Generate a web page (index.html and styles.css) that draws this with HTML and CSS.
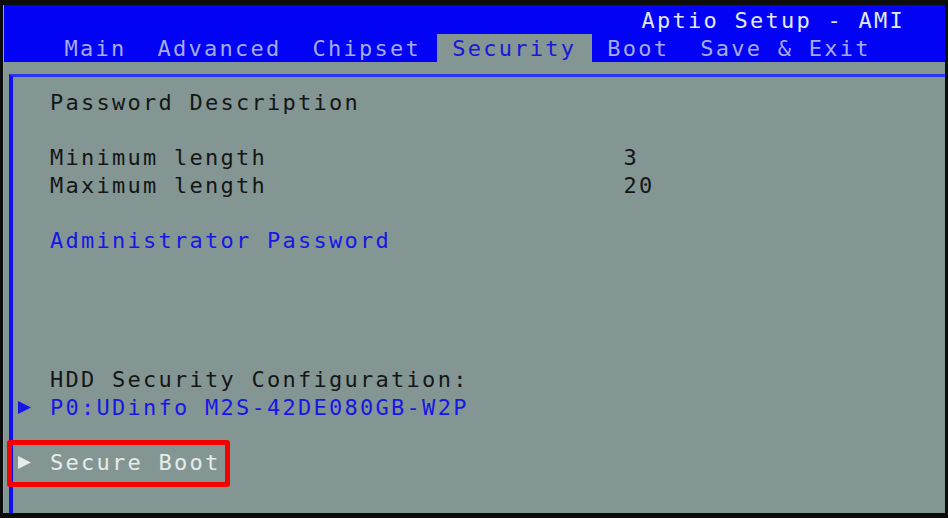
FILE: index.html
```html
<!DOCTYPE html>
<html lang="en">
<head>
<meta charset="utf-8">
<title>Aptio Setup - AMI</title>
<link rel="stylesheet" href="styles.css">
</head>
<body>
<div class="screen">
  <header class="header">
    <div class="title">Aptio Setup - AMI</div>
    <nav class="tabs">
      <span class="tab">Main</span>
      <span class="tab">Advanced</span>
      <span class="tab">Chipset</span>
      <span class="tab active">Security</span>
      <span class="tab">Boot</span>
      <span class="tab">Save &amp; Exit</span>
    </nav>
  </header>
  <main class="panel">
    <div class="row"><span class="marker"></span><span class="label">Password Description</span></div>
    <div class="row gap-1"><span class="marker"></span><span class="label wide">Minimum length</span><span class="value">3</span></div>
    <div class="row"><span class="marker"></span><span class="label wide">Maximum length</span><span class="value">20</span></div>
    <div class="row gap-1 link"><span class="marker"></span><span class="label">Administrator Password</span></div>
    <div class="row gap-4"><span class="marker"></span><span class="label">HDD Security Configuration:</span></div>
    <div class="row link"><span class="marker"><svg class="arrow" viewBox="0 0 12 12"><polygon points="0,0 12,6 0,12"/></svg></span><span class="label">P0:UDinfo M2S-42DE080GB-W2P</span></div>
    <div class="row gap-1 selected"><span class="marker"><svg class="arrow" viewBox="0 0 12 12"><polygon points="0,0 12,6 0,12"/></svg></span><span class="label">Secure Boot</span></div>
  </main>
</div>
</body>
</html>
```

FILE: styles.css
```css
html, body {
  margin: 0;
  padding: 0;
  background: #0c0c0c;
}

body {
  width: 948px;
  height: 518px;
  overflow: hidden;
  font-family: "DejaVu Sans Mono", "Liberation Mono", monospace;
  font-size: 22px;
  letter-spacing: 2.26px;
}

.screen {
  margin: 5px 3px 0 3px;
  height: 508px;
  background: #849694;
  display: flex;
  flex-direction: column;
  border-left: 1px solid #9aa3a2;
  box-sizing: border-box;
}

.header {
  background: #0202f4;
  height: 57px;
  display: flex;
  flex-direction: column;
}

.title {
  height: 29px;
  line-height: 31px;
  text-align: right;
  padding-right: 40px;
  color: #e2e8f4;
}

.tabs {
  display: flex;
  height: 28px;
  padding-left: 45px;
}

.tab {
  padding: 0 15.5px;
  line-height: 29px;
  color: #a6aaee;
}

.tab.active {
  background: #849694;
  color: #1818d6;
}

.panel {
  flex: 1;
  margin: 12px 0 0 5px;
  border-top: 3px solid #2a36f4;
  border-left: 4px solid #1010f6;
  padding-top: 12px;
  color: #141616;
}

.row {
  display: flex;
  align-items: center;
  height: 27.7px;
  line-height: 27.7px;
}

.gap-1 { margin-top: 27.7px; }
.gap-4 { margin-top: 110.8px; }

.marker {
  width: 37px;
  flex: none;
  display: flex;
  align-items: center;
}

.arrow {
  width: 13px;
  height: 13px;
  margin-left: 5px;
  fill: currentColor;
}

.label.wide {
  width: 573.5px;
}

.link { color: #1616e6; }

.selected {
  color: #e6ece8;
  position: relative;
  width: fit-content;
}

.selected::after {
  content: "";
  position: absolute;
  top: -9px;
  bottom: -10px;
  left: -6px;
  right: -9px;
  border: 5px solid #f40000;
  border-radius: 3px;
}
```
